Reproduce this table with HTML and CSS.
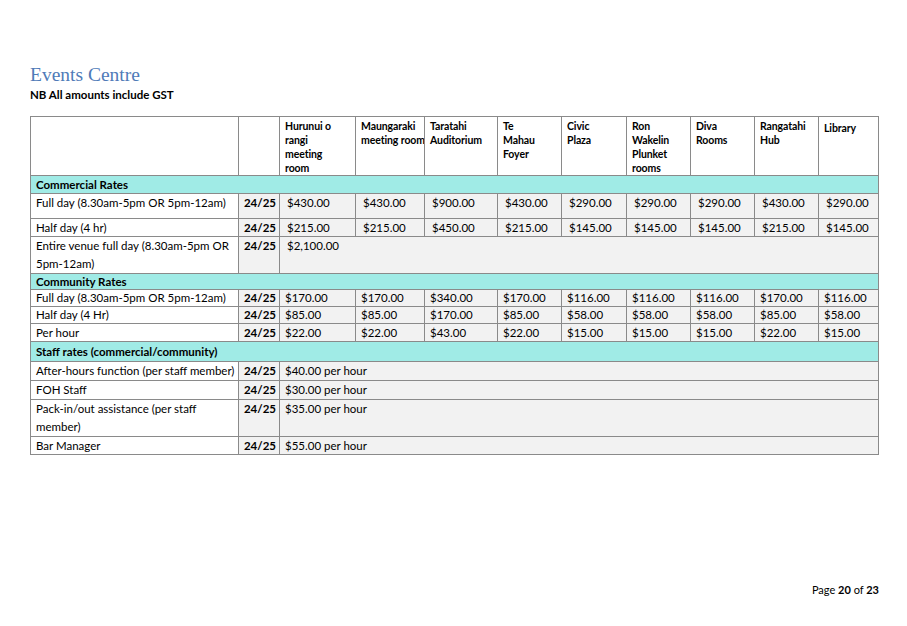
FILE: index.html
```html
<!DOCTYPE html>
<html>
<head>
<meta charset="utf-8">
<link rel="stylesheet" href="styles.css">
</head>
<body>
<div class="page">
  <h1 class="title">Events Centre</h1>
  <p class="note">NB All amounts include GST</p>
  <table class="rates">
    <colgroup>
      <col class="c-label"><col class="c-year"><col class="c-v1"><col class="c-v2"><col class="c-v3"><col class="c-v4"><col class="c-v5"><col class="c-v6"><col class="c-v7"><col class="c-v8"><col class="c-v9">
    </colgroup>
    <tr class="head">
      <td></td><td></td>
      <td>Hurunui o<br>rangi<br>meeting<br>room</td>
      <td>Maungaraki<br>meeting room</td>
      <td>Taratahi<br>Auditorium</td>
      <td>Te<br>Mahau<br>Foyer</td>
      <td>Civic<br>Plaza</td>
      <td>Ron<br>Wakelin<br>Plunket<br>rooms</td>
      <td>Diva<br>Rooms</td>
      <td>Rangatahi<br>Hub</td>
      <td class="lib">Library</td>
    </tr>
    <tr class="section r18"><td colspan="11">Commercial Rates</td></tr>
    <tr class="r25 com top">
      <td class="label">Full day (8.30am-5pm OR 5pm-12am)</td><td class="yr">24/25</td>
      <td>$430.00</td><td>$430.00</td><td>$900.00</td><td>$430.00</td><td>$290.00</td><td>$290.00</td><td>$290.00</td><td>$430.00</td><td>$290.00</td>
    </tr>
    <tr class="r18 com">
      <td class="label">Half day (4 hr)</td><td class="yr">24/25</td>
      <td>$215.00</td><td>$215.00</td><td>$450.00</td><td>$215.00</td><td>$145.00</td><td>$145.00</td><td>$145.00</td><td>$215.00</td><td>$145.00</td>
    </tr>
    <tr class="r36 com two">
      <td class="label">Entire venue full day (8.30am-5pm OR<br>5pm-12am)</td><td class="yr">24/25</td>
      <td colspan="9">$2,100.00</td>
    </tr>
    <tr class="section r16"><td colspan="11">Community Rates</td></tr>
    <tr class="r17">
      <td class="label">Full day (8.30am-5pm OR 5pm-12am)</td><td class="yr">24/25</td>
      <td>$170.00</td><td>$170.00</td><td>$340.00</td><td>$170.00</td><td>$116.00</td><td>$116.00</td><td>$116.00</td><td>$170.00</td><td>$116.00</td>
    </tr>
    <tr class="r17">
      <td class="label">Half day (4 Hr)</td><td class="yr">24/25</td>
      <td>$85.00</td><td>$85.00</td><td>$170.00</td><td>$85.00</td><td>$58.00</td><td>$58.00</td><td>$58.00</td><td>$85.00</td><td>$58.00</td>
    </tr>
    <tr class="r18">
      <td class="label">Per hour</td><td class="yr">24/25</td>
      <td>$22.00</td><td>$22.00</td><td>$43.00</td><td>$22.00</td><td>$15.00</td><td>$15.00</td><td>$15.00</td><td>$22.00</td><td>$15.00</td>
    </tr>
    <tr class="section r20"><td colspan="11">Staff rates (commercial/community)</td></tr>
    <tr class="r19">
      <td class="label">After-hours function (per staff member)</td><td class="yr">24/25</td>
      <td colspan="9">$40.00 per hour</td>
    </tr>
    <tr class="r19">
      <td class="label">FOH Staff</td><td class="yr">24/25</td>
      <td colspan="9">$30.00 per hour</td>
    </tr>
    <tr class="r37 two">
      <td class="label">Pack-in/out assistance (per staff<br>member)</td><td class="yr">24/25</td>
      <td colspan="9">$35.00 per hour</td>
    </tr>
    <tr class="r18">
      <td class="label">Bar Manager</td><td class="yr">24/25</td>
      <td colspan="9">$55.00 per hour</td>
    </tr>
  </table>
  <div class="footer">Page <b>20</b> of <b>23</b></div>
</div>
</body>
</html>
```
FILE: styles.css
```css
html, body {
  margin: 0;
  padding: 0;
  background: #ffffff;
}
body {
  font-family: "Lato", "Open Sans", sans-serif;
  color: #000;
  width: 907px;
  height: 626px;
  overflow: hidden;
}
.page {
  padding: 63px 28px 0 30px;
  position: relative;
  height: 563px;
}
.title {
  margin: 0;
  font-family: "Liberation Serif", serif;
  font-weight: normal;
  font-size: 19.5px;
  line-height: 24px;
  color: #4f7bb8;
}
.note {
  margin: 0;
  font-size: 11.5px;
  line-height: 15px;
  font-weight: bold;
}
.rates {
  margin-top: 14px;
  border-collapse: collapse;
  table-layout: fixed;
  width: 849px;
  font-size: 11.5px;
}
.c-label { width: 208px; }
.c-year { width: 41px; }
.c-v1 { width: 76px; }
.c-v2 { width: 69px; }
.c-v3 { width: 73px; }
.c-v4 { width: 64px; }
.c-v5 { width: 65px; }
.c-v6 { width: 64px; }
.c-v7 { width: 64px; }
.c-v8 { width: 64px; }
.c-v9 { width: 60px; }
.rates td {
  border: 1px solid #8a8a8a;
  padding: 0 3px 0 5px;
  vertical-align: middle;
  line-height: 14px;
  background: #f2f2f2;
  white-space: nowrap;
  overflow: hidden;
}
.rates td.label {
  background: #ffffff;
}
.rates td.yr {
  font-weight: bold;
  text-align: right;
  padding-right: 3px;
  padding-left: 2px;
}
.rates .com td:not(.label):not(.yr) {
  padding-left: 7px;
}
.rates .top td {
  vertical-align: top;
  padding-top: 2px;
}
.rates .two td {
  vertical-align: top;
  line-height: 18px;
}
.rates .head td {
  background: #ffffff;
  font-weight: bold;
  font-size: 10.5px;
  line-height: 14px;
  padding: 2px 0 0 5px;
  letter-spacing: -0.1px;
  vertical-align: top;
  height: 54px;
}
.rates .head td.lib {
  padding-top: 4px;
}
.rates .section td {
  background: #a0ebe6;
  font-weight: bold;
}
.r16 { height: 16px; }
.r17 { height: 17px; }
.r18 { height: 18px; }
.r19 { height: 19px; }
.r20 { height: 20px; }
.r25 { height: 25px; }
.r36 { height: 36px; }
.r37 { height: 37px; }
.footer {
  position: absolute;
  right: 28px;
  top: 583px;
  font-size: 11px;
  line-height: 14px;
}
```
